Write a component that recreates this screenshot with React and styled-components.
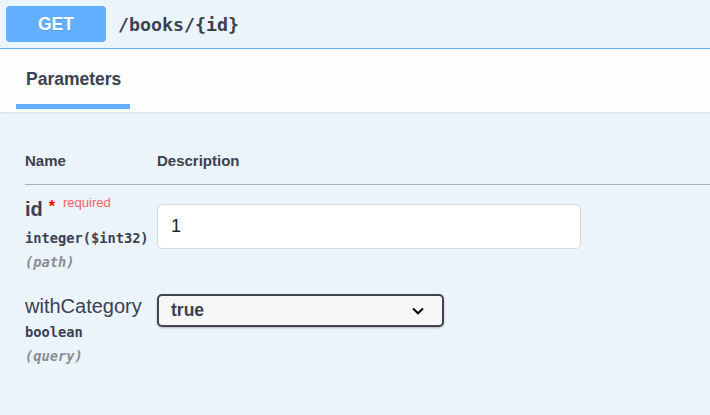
import styled, { createGlobalStyle } from 'styled-components';

const GlobalStyle = createGlobalStyle`
  html, body {
    margin: 0;
    padding: 0;
    background: #ebf3fb;
  }
  body {
    font-family: "Liberation Sans", Arial, sans-serif;
    color: #3b4151;
  }
`;

const Opblock = styled.div`
  display: flex;
  flex-direction: column;
  width: 710px;
  min-height: 415px;
  background: #ebf3fb;
`;

const Summary = styled.div`
  display: flex;
  align-items: center;
  height: 36px;
  padding: 6px;
  border-bottom: 1px solid #61affe;
`;

const Method = styled.div`
  display: flex;
  align-items: center;
  justify-content: center;
  width: 100px;
  height: 36px;
  border-radius: 4px;
  background: #61affe;
  color: #fff;
  font-size: 17.5px;
  font-weight: 700;
  text-shadow: 0 1px 0 rgba(0, 0, 0, 0.1);
`;

const Path = styled.span`
  padding-left: 12px;
  font-family: "DejaVu Sans Mono", "Liberation Mono", monospace;
  font-size: 18.3px;
  font-weight: 700;
  color: #3b4151;
`;

const SectionHeader = styled.div`
  display: flex;
  padding: 20px 0 3px 16px;
  background: rgba(255, 255, 255, 0.8);
  box-shadow: 0 1px 2px rgba(0, 0, 0, 0.1);
`;

const Tab = styled.div`
  padding: 0 10px 15px;
  width: 94px;
  border-bottom: 5px solid #61affe;
  font-size: 17.5px;
  font-weight: 700;
  line-height: 20px;
`;

const Table = styled.div`
  display: flex;
  flex-direction: column;
  padding: 40px 0 0 25px;
`;

const HeadRow = styled.div`
  display: grid;
  grid-template-columns: 132px 1fr;
  padding-bottom: 14px;
  border-bottom: 1px solid #a9afba;
`;

const HeadCell = styled.div`
  font-size: 15px;
  font-weight: 700;
  line-height: 18px;
`;

const Row = styled.div`
  display: grid;
  grid-template-columns: 132px 1fr;
  padding: 12px 0 11px;
`;

const NameCell = styled.div`
  display: flex;
  flex-direction: column;
`;

const ParamName = styled.div`
  font-size: 20px;
  line-height: 24px;
  font-weight: ${(p) => (p.required ? 700 : 400)};
  white-space: nowrap;
`;

const Star = styled.span`
  position: relative;
  top: -4px;
  margin-left: 6px;
  color: #f00;
  font-size: 16px;
  font-weight: 700;
`;

const Required = styled.span`
  position: relative;
  top: -9px;
  margin-left: 8px;
  color: #f76164;
  font-size: 13px;
  font-weight: 400;
`;

const Mono = styled.div`
  padding-top: ${(p) => (p.italic ? 6 : 5)}px;
  font-family: "DejaVu Sans Mono", "Liberation Mono", monospace;
  font-size: 13.7px;
  line-height: 18px;
  font-weight: 700;
  font-style: ${(p) => (p.italic ? 'italic' : 'normal')};
  color: ${(p) => (p.italic ? '#8a8d93' : '#3b4151')};
`;

const DescCell = styled.div`
  display: flex;
  align-items: flex-start;
`;

const Input = styled.input`
  box-sizing: border-box;
  width: 424px;
  height: 45px;
  margin-top: 7px;
  padding: 10px 13px;
  border: 1px solid #d9d9d9;
  border-radius: 5px;
  background: #fff;
  font-family: "Liberation Sans", Arial, sans-serif;
  font-size: 18px;
  color: #222;
  outline: none;
`;

const Select = styled.div`
  box-sizing: border-box;
  display: flex;
  align-items: center;
  justify-content: space-between;
  width: 287px;
  height: 33px;
  padding: 0 18px 0 12px;
  border: 2px solid #41444e;
  border-radius: 5px;
  background: #f7f7f7;
  box-shadow: 0 1px 2px 0 rgba(0, 0, 0, 0.25);
  font-size: 17.5px;
  font-weight: 700;
  color: #3b4151;
`;

function Chevron() {
  return (
    <svg width="12" height="8" viewBox="0 0 12 8">
      <path d="M1 1.5 L6 6.3 L11 1.5" fill="none" stroke="#000" strokeWidth="2" />
    </svg>
  );
}

export default function App() {
  return (
    <Opblock>
      <GlobalStyle />
      <Summary>
        <Method>GET</Method>
        <Path>/books/{'{id}'}</Path>
      </Summary>
      <SectionHeader>
        <Tab>Parameters</Tab>
      </SectionHeader>
      <Table>
        <HeadRow>
          <HeadCell>Name</HeadCell>
          <HeadCell>Description</HeadCell>
        </HeadRow>
        <Row>
          <NameCell>
            <ParamName required>
              id<Star>*</Star>
              <Required>required</Required>
            </ParamName>
            <Mono>integer($int32)</Mono>
            <Mono italic>(path)</Mono>
          </NameCell>
          <DescCell>
            <Input type="text" defaultValue="1" />
          </DescCell>
        </Row>
        <Row>
          <NameCell>
            <ParamName>withCategory</ParamName>
            <Mono>boolean</Mono>
            <Mono italic>(query)</Mono>
          </NameCell>
          <DescCell>
            <Select>
              <span>true</span>
              <Chevron />
            </Select>
          </DescCell>
        </Row>
      </Table>
    </Opblock>
  );
}
